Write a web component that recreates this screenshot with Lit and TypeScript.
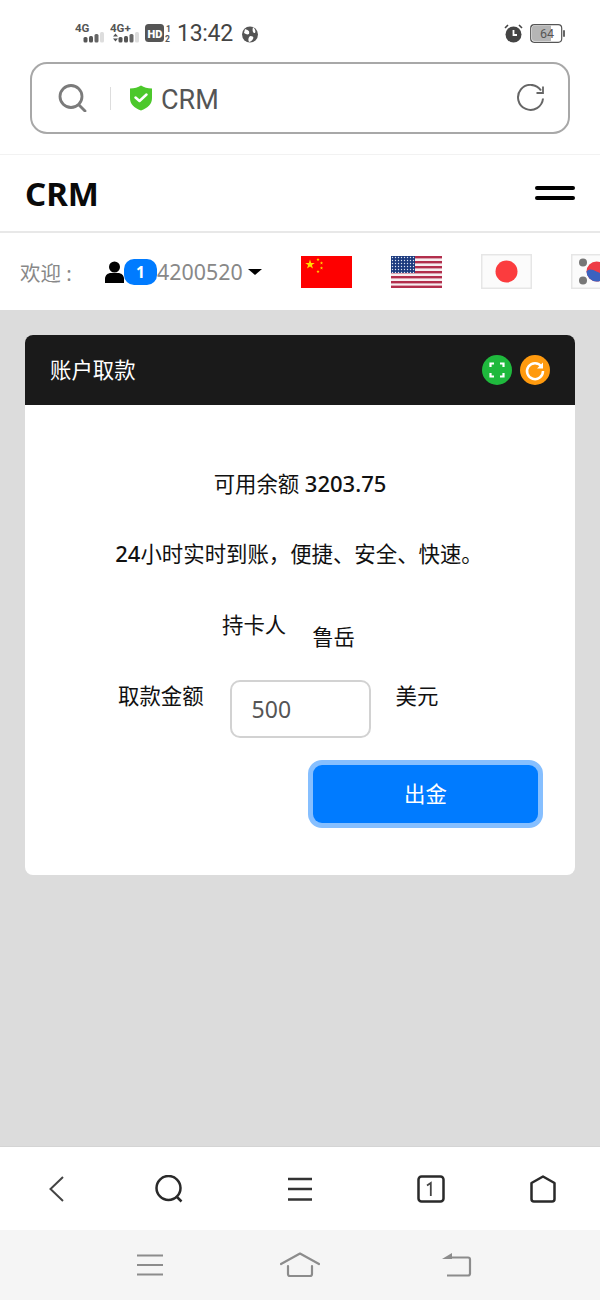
import { LitElement, html, css, svg } from "lit";
import { customElement } from "lit/decorators.js";

const sig = (plus: boolean) => html`<svg class="sig" width="31" height="22" viewBox="0 0 31 22">
  <text x="0" y="9.5" font-family="Roboto" font-weight="700" font-size="11.5" fill="#555">${plus ? "4G+" : "4G"}</text>
  ${plus ? svg`<path d="M3 14.5l2.5-3 2.5 3zM3 16.5l2.5 3 2.5-3z" fill="#555"/>` : ""}
  <rect x="8.5" y="15" width="4" height="5.5" rx="1.5" fill="#555"/>
  <rect x="14" y="14" width="4" height="6.5" rx="1.5" fill="#555"/>
  <rect x="19.5" y="12" width="4" height="8.5" rx="1.5" fill="#666"/>
  <rect x="25" y="10" width="4" height="10.5" rx="1.5" fill="#ddd"/>
</svg>`;

const star = (cx: number, cy: number, r: number) => {
  const p: string[] = [];
  for (let i = 0; i < 10; i++) {
    const a = (Math.PI / 5) * i - Math.PI / 2;
    const q = i % 2 ? r * 0.4 : r;
    p.push(`${(cx + q * Math.cos(a)).toFixed(2)},${(cy + q * Math.sin(a)).toFixed(2)}`);
  }
  return svg`<polygon points=${p.join(" ")} fill="#ffde00"/>`;
};

const flagCn = html`<svg class="flag" width="51" height="32" viewBox="0 0 51 32">
  <rect width="51" height="32" fill="#fe0000"/>
  ${star(9, 8.5, 5)}${star(17, 3.5, 1.7)}${star(20.5, 7, 1.7)}${star(20.5, 12, 1.7)}${star(17, 15.5, 1.7)}
</svg>`;

const flagUs = html`<svg class="flag" width="51" height="32" viewBox="0 0 51 32">
  <defs><pattern id="st" width="3" height="3" patternUnits="userSpaceOnUse"><circle cx="1.5" cy="1.5" r=".7" fill="#dfe4f2"/></pattern></defs>
  <rect width="51" height="32" fill="#f6eef0"/>
  ${[0, 5, 10, 15, 20, 25, 29.6].map((y) => svg`<rect y=${y} width="51" height="2.4" fill="#b22e4c"/>`)}
  <rect width="24" height="17" fill="#1c3a7e"/><rect width="24" height="17" fill="url(#st)"/>
</svg>`;

const flagJp = html`<svg class="flag" width="51" height="35" viewBox="0 0 51 35">
  <rect width="51" height="35" fill="#e6e6e6"/><rect x="1.5" y="1.500" width="48" height="32" fill="#fbfbfb"/>
  <circle cx="25.5" cy="17.5" r="11" fill="#fb3c3e"/>
</svg>`;

const flagKr = html`<svg class="flag" width="51" height="35" viewBox="0 0 51 35">
  <rect width="51" height="35" fill="#e6e6e6"/><rect x="1.5" y="1.500" width="48" height="32" fill="#fbfbfb"/>
  <circle cx="25.5" cy="17.5" r="10" fill="#ee3b46"/><path d="M15.5 17.5a10 10 0 0 0 20 0c-3 3-6 2-10 0s-7-3-10 0z" fill="#3a62c0"/>
  <circle cx="12" cy="8.500" r="4" fill="#777"/><circle cx="12" cy="26.500" r="4" fill="#777"/>
</svg>`;

@customElement("app-root")
export class AppRoot extends LitElement {
  static styles = css`
    :host { display: flex; flex-direction: column; width: 600px; height: 1300px; overflow: hidden; background: #fff;
      font-family: "Noto Sans", "Noto Sans CJK SC", sans-serif; color: #111; }
    svg { display: block; flex: none; }

    .status { height: 62px; flex: none; display: flex; align-items: center; padding: 5px 35px 0 75px; box-sizing: border-box; }
    .sig { margin-right: 4px; margin-top: -2px; }
    .time { font-family: Roboto, sans-serif; font-size: 23px; color: #444; margin: 0 9px 0 4px; letter-spacing: -.3px; line-height: 1; }
    .grow { flex: 1; }
    .batt { margin-left: 7px; }

    .urlbar { flex: none; height: 72px; margin: 0 30px; box-sizing: border-box; border: 2.5px solid #a8a8a8; border-radius: 17px;
      display: flex; align-items: center; padding: 0 23px 0 25.5px; }
    .divider { width: 1px; height: 23px; background: #ddd; margin: 0 18.5px 0 23px; }
    .url { font-family: Roboto, sans-serif; font-size: 27px; color: #555; margin: 4px 0 0 8px; line-height: 1; }

    .header { flex: none; margin-top: 20px; height: 79px; box-sizing: border-box; border-top: 1px solid #f2f2f2; border-bottom: 2px solid #e8e8e8;
      display: flex; align-items: center; justify-content: space-between; padding: 0 25px; }
    .brand { font-size: 33px; font-weight: 700; color: #0a0a0a; line-height: 1; margin-top: 1px; }
    .burger { display: flex; flex-direction: column; gap: 6.5px; width: 40px; }
    .burger i { display: block; height: 3.5px; border-radius: 2px; background: #000; }

    .welcome { flex: none; height: 77px; display: flex; align-items: center; padding-left: 20px; overflow: hidden; color: #888; font-size: 20px; white-space: nowrap; }
    .hello { flex: none; width: 85px; font-size: 20.5px; }
    .badge { width: 33px; height: 26px; border-radius: 10px; background: #007bff; color: #fff; font-size: 15.5px; font-weight: 700;
      display: flex; align-items: center; justify-content: center; flex: none; }
    .uid { flex: none; font-size: 21.4px; line-height: 1; }
    .caret { margin: 0 39px 0 5px; }
    .flag { margin-right: 39px; }

    main { flex: 1; background: #dcdcdc; padding: 25px; border-bottom: 1px solid #d4d4d4; }
    .card { height: 540px; background: #fff; border-radius: 8px; overflow: hidden; }
    .card-head { height: 70px; background: #1a1a1a; color: #fff; display: flex; align-items: center; padding: 0 25px; font-size: 21.4px; gap: 8px; }
    .card-head .title { flex: 1; margin-bottom: 4px; }
    .card-body { padding-top: 61px; font-size: 21.4px; line-height: 34px; color: #111; }
    .center { text-align: center; }
    .amt { font-size: 22px; font-weight: 500; }
    .slogan { margin-top: 35px; padding-right: 2px; }
    .holder { display: flex; margin-top: 37px; padding-left: 197px; gap: 26px; }
    .holder .name { margin-top: 12px; }
    .withdraw { display: flex; align-items: flex-start; margin-top: 26px; padding-left: 93px; }
    .withdraw .lb { margin-top: -1px; }
    .input { width: 141px; height: 58px; box-sizing: border-box; border: 2px solid #d2d2d2; border-radius: 10px; margin: 0 25px 0 26px;
      padding-left: 20px; display: flex; align-items: center; color: #555; font-size: 23px; }
    .btn { display: flex; align-items: center; justify-content: center; width: 225px; height: 58px; margin: 27px 0 0 288px;
      border-radius: 9px; background: #007bff; color: #fff; font-size: 21.4px; box-shadow: 0 0 0 5px #86bfff; }

    .tabbar { flex: none; height: 83px; background: #fff; display: grid; grid-template-columns: 114px 110px 152px 110px 114px; justify-items: center; align-items: center; }
    .sysbar { flex: none; height: 70px; background: #f5f5f5; display: grid; grid-template-columns: 100px 200px 114px; padding-left: 100px; justify-items: center; align-items: center; }
  `;

  render() {
    return html`
      <div class="status">
        ${sig(false)}${sig(true)}
        <svg width="28" height="20" viewBox="0 0 28 20">
          <rect x="0" y="0" width="19" height="18" rx="3.5" fill="#555"/>
          <text x="2.6" y="13.500" font-family="Roboto" font-weight="900" font-size="11" fill="#fff">HD</text>
          <text x="21" y="8" font-family="Roboto" font-weight="700" font-size="8.5" fill="#555">1</text>
          <text x="20" y="18" font-family="Roboto" font-weight="700" font-size="8.5" fill="#555">2</text>
        </svg>
        <span class="time">13:42</span>
        <svg width="16" height="18" viewBox="0 0 16 18">
          <circle cx="8" cy="9.5" r="8" fill="#555"/>
          <path d="M3 4c3 1 5 2 4 5-2 1-3 0-5-1zM8 11c3 0 4 1 3 3-1 2-3 3-4 3-1-2-1-4 1-6zM11 2c2 2 3 4 2 6-2 0-3-2-2-6z" fill="#fff"/>
        </svg>
        <span class="grow"></span>
        <svg width="19" height="19" viewBox="0 0 19 19">
          <circle cx="9.5" cy="10.5" r="8" fill="#444"/>
          <path d="M9.5 6v5h3.5" fill="none" stroke="#fff" stroke-width="1.8"/>
          <path d="M1 4l3-3M18 4l-3-3" stroke="#444" stroke-width="1.6"/>
        </svg>
        <svg class="batt" width="35" height="19" viewBox="0 0 35 19">
          <rect x=".7" y=".7" width="31" height="17.6" rx="3.5" fill="#fff" stroke="#555" stroke-width="1.2"/>
          <path d="M2 4a2.500 2.500 0 0 1 2.500-2.500H21V17H4.500A2.500 2.500 0 0 1 2 14.500z" fill="#b5b5b5"/>
          <rect x="33" y="6" width="2" height="7" rx="1" fill="#666"/>
          <text x="10" y="14" font-family="Roboto" font-size="12.500" fill="#555">64</text>
        </svg>
      </div>

      <div class="urlbar">
        <svg width="29" height="28" viewBox="0 0 29 28" fill="none" stroke="#7b7b7b" stroke-width="2.800">
          <circle cx="13" cy="12.500" r="11"/><path d="M21 21l6 6" stroke-linecap="round"/>
        </svg>
        <span class="divider"></span>
        <svg width="24" height="26" viewBox="0 0 24 26">
          <path d="M12 .5c3 2 6.500 3 11 3V13c0 6-4 10-11 12.500C5 23 1 19 1 13V3.500c4.500 0 8-1 11-3z" fill="#4cc82b"/>
          <path d="M6.500 12.500l4 3.500 7-6.500" fill="none" stroke="#fff" stroke-width="2.500" stroke-linecap="round" stroke-linejoin="round"/>
        </svg>
        <span class="url">CRM</span>
        <span class="grow"></span>
        <svg width="29" height="28" viewBox="0 0 29 28" fill="none" stroke="#666" stroke-width="2">
          <path d="M25 6.500A12.500 12.500 0 1 0 27 14.500"/>
          <path d="M27 2.500v6.500h-6.500" stroke-linejoin="miter" stroke-width="1.800"/>
        </svg>
      </div>

      <div class="header">
        <span class="brand">CRM</span>
        <div class="burger"><i></i><i></i></div>
      </div>

      <div class="welcome">
        <span class="hello">欢迎 :</span>
        <svg width="19" height="22" viewBox="0 0 19 22">
          <circle cx="9.500" cy="6" r="5.500" fill="#000"/>
          <path d="M0 22v-4c0-4 3-6 6-6h7c3 0 6 2 6 6v4z" fill="#000"/>
        </svg>
        <span class="badge">1</span>
        <span class="uid">4200520</span>
        <svg class="caret" width="14" height="6" viewBox="0 0 14 6"><path d="M0 0h14L7 6z" fill="#000"/></svg>
        ${flagCn}${flagUs}${flagJp}${flagKr}
      </div>

      <main>
        <section class="card">
          <div class="card-head">
            <span class="title">账户取款</span>
            <svg width="30" height="30" viewBox="0 0 30 30">
              <circle cx="15" cy="15" r="15" fill="#1fb93d"/>
              <path d="M8.500 12V8.500H12M18 8.500h3.500V12M21.500 18v3.500H18M12 21.500H8.500V18" fill="none" stroke="#fff" stroke-width="2.200"/>
            </svg>
            <svg width="30" height="30" viewBox="0 0 30 30">
              <circle cx="15" cy="15" r="15" fill="#ff9a0e"/>
              <path d="M21.500 11.500A8 8 0 1 0 23 16" fill="none" stroke="#fff" stroke-width="2.500"/>
              <path d="M23 7.500v6h-6z" fill="#fff"/>
            </svg>
          </div>
          <div class="card-body">
            <div class="center">可用余额 <span class="amt">3203.75</span></div>
            <div class="center slogan"><span class="amt">24</span>小时实时到账，便捷、安全、快速。</div>
            <div class="holder"><span>持卡人</span><span class="name">鲁岳</span></div>
            <div class="withdraw">
              <span class="lb">取款金额</span>
              <div class="input">500</div>
              <span class="lb">美元</span>
            </div>
            <div class="btn">出金</div>
          </div>
        </section>
      </main>

      <nav class="tabbar">
        <svg width="26" height="28" viewBox="0 0 26 28" fill="none" stroke="#444" stroke-width="2"><path d="M19 2L6.500 14 19 26" /></svg>
        <svg width="28" height="28" viewBox="0 0 28 28" fill="none" stroke="#2a2a2a" stroke-width="2.500">
          <circle cx="13.500" cy="13" r="12"/><path d="M22 22l4.500 4.500"/>
        </svg>
        <svg width="26" height="24" viewBox="0 0 26 24" fill="none" stroke="#333" stroke-width="2.500"><path d="M1 2h24M1 12h24M1 22.500h24"/></svg>
        <svg width="28" height="28" viewBox="0 0 28 28">
          <rect x="1.500" y="1.500" width="25" height="25" rx="3" fill="none" stroke="#2a2a2a" stroke-width="2.500"/>
          <path d="M10 10.500l3.800-2.500V21" fill="none" stroke="#444" stroke-width="1.800"/>
        </svg>
        <svg width="26" height="28" viewBox="0 0 26 28" fill="none" stroke="#2a2a2a" stroke-width="2.500" stroke-linejoin="round">
          <path d="M13 1.500L24.500 8v16a2.500 2.500 0 0 1-2.500 2.500H4A2.500 2.500 0 0 1 1.500 24V8z"/>
        </svg>
      </nav>

      <div class="sysbar">
        <svg width="28" height="22" viewBox="0 0 28 22" fill="none" stroke="#8c8c8c" stroke-width="2.200"><path d="M1 1.500h26M1 11h26M1 20.500h26"/></svg>
        <svg width="40" height="26" viewBox="0 0 40 26" fill="none" stroke="#8c8c8c" stroke-width="2.200" stroke-linejoin="round" stroke-linecap="round">
          <path d="M1 12L20 1.500 39 12"/><path d="M8 14v8a2 2 0 0 0 2 2h20a2 2 0 0 0 2-2v-8"/>
        </svg>
        <svg width="30" height="24" viewBox="0 0 30 24" fill="none" stroke="#8c8c8c" stroke-width="2.200">
          <path d="M6 4.500h20a2 2 0 0 1 2 2v14a2 2 0 0 1-2 2H5"/>
          <path d="M10 0v6H0z" fill="#8c8c8c" stroke="none"/>
        </svg>
      </div>
    `;
  }
}
